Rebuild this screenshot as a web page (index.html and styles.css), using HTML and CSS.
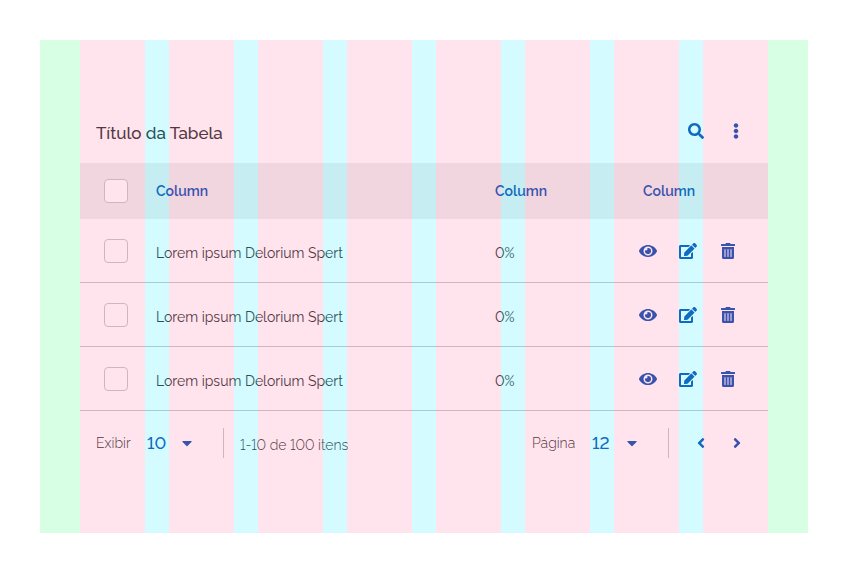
FILE: index.html
```html
<!DOCTYPE html>
<html lang="pt-BR">
<head>
<meta charset="utf-8">
<meta name="viewport" content="width=device-width, initial-scale=1">
<title>Título da Tabela</title>
<link rel="stylesheet" href="styles.css">
</head>
<body>
<svg class="sprite" aria-hidden="true">
  <symbol id="search" viewBox="0 0 512 512"><path d="M505 442.7L405.3 343c-4.5-4.5-10.6-7-17-7H372c27.6-35.3 44-79.7 44-128C416 93.1 322.9 0 208 0S0 93.1 0 208s93.1 208 208 208c48.3 0 92.7-16.4 128-44v16.3c0 6.4 2.5 12.5 7 17l99.7 99.7c9.4 9.4 24.6 9.4 33.9 0l28.3-28.3c9.4-9.4 9.4-24.6.1-34zM208 336c-70.7 0-128-57.2-128-128 0-70.7 57.2-128 128-128 70.7 0 128 57.2 128 128 0 70.7-57.2 128-128 128z"/></symbol>
  <symbol id="more" viewBox="0 0 192 512"><path d="M96 184c39.8 0 72 32.2 72 72s-32.2 72-72 72-72-32.2-72-72 32.2-72 72-72zM24 80c0 39.8 32.2 72 72 72s72-32.2 72-72S135.8 8 96 8 24 40.2 24 80zm0 352c0 39.8 32.2 72 72 72s72-32.2 72-72-32.2-72-72-72-72 32.2-72 72z"/></symbol>
  <symbol id="eye" viewBox="0 0 576 512"><path d="M572.52 241.4C518.29 135.59 410.93 64 288 64S57.68 135.64 3.48 241.41a32.35 32.35 0 0 0 0 29.19C57.71 376.41 165.07 448 288 448s230.32-71.64 284.52-177.41a32.35 32.35 0 0 0 0-29.19zM288 400a144 144 0 1 1 144-144 143.93 143.93 0 0 1-144 144zm0-240a95.31 95.31 0 0 0-25.31 3.79 47.85 47.85 0 0 1-66.9 66.9A95.78 95.78 0 1 0 288 160z"/></symbol>
  <symbol id="edit" viewBox="0 0 576 512"><path d="M402.6 83.2l90.2 90.2c3.8 3.8 3.8 10 0 13.8L274.4 405.6l-92.8 10.3c-12.4 1.4-22.9-9.1-21.5-21.5l10.3-92.8L388.8 83.2c3.8-3.8 10-3.8 13.8 0zm162-22.9l-48.8-48.8c-15.2-15.2-39.9-15.2-55.2 0l-35.4 35.4c-3.8 3.8-3.8 10 0 13.8l90.2 90.2c3.8 3.8 10 3.8 13.8 0l35.4-35.4c15.2-15.3 15.2-40 0-55.2zM384 346.2V448H64V128h229.8c3.2 0 6.2-1.3 8.5-3.5l40-40c7.6-7.6 2.2-20.5-8.5-20.5H48C21.5 64 0 85.5 0 112v352c0 26.5 21.5 48 48 48h352c26.5 0 48-21.5 48-48V306.2c0-10.7-12.9-16-20.5-8.5l-40 40c-2.2 2.3-3.5 5.3-3.5 8.5z"/></symbol>
  <symbol id="trash" viewBox="0 0 448 512"><path d="M32 464a48 48 0 0 0 48 48h288a48 48 0 0 0 48-48V128H32zm272-256a16 16 0 0 1 32 0v224a16 16 0 0 1-32 0zm-96 0a16 16 0 0 1 32 0v224a16 16 0 0 1-32 0zm-96 0a16 16 0 0 1 32 0v224a16 16 0 0 1-32 0zM432 32H312l-9.4-18.7A24 24 0 0 0 281.1 0H166.8a23.72 23.72 0 0 0-21.4 13.3L136 32H16A16 16 0 0 0 0 48v32a16 16 0 0 0 16 16h416a16 16 0 0 0 16-16V48a16 16 0 0 0-16-16z"/></symbol>
  <symbol id="caret" viewBox="0 0 320 512"><path d="M31.3 192h257.3c17.8 0 26.7 21.5 14.1 34.1L174.1 354.8c-7.8 7.8-20.5 7.8-28.3 0L17.2 226.1C4.6 213.5 13.5 192 31.3 192z"/></symbol>
  <symbol id="left" viewBox="0 0 256 512"><path d="M31.7 239l136-136c9.4-9.4 24.6-9.4 33.9 0l22.6 22.6c9.4 9.4 9.4 24.6 0 33.9L127.9 256l96.4 96.4c9.4 9.4 9.4 24.6 0 33.9L201.7 409c-9.4 9.4-24.6 9.4-33.9 0l-136-136c-9.5-9.4-9.5-24.6-.1-34z"/></symbol>
  <symbol id="right" viewBox="0 0 256 512"><path d="M224.3 273l-136 136c-9.4 9.4-24.6 9.4-33.9 0l-22.6-22.6c-9.4-9.4-9.4-24.6 0-33.9l96.4-96.4-96.4-96.4c-9.4-9.4-9.4-24.6 0-33.9L54.3 103c9.4-9.4 24.6-9.4 33.9 0l136 136c9.5 9.4 9.5 24.6.1 34z"/></symbol>
</svg>
<main class="frame">
  <header class="toolbar">
    <h1 class="title">Título da Tabela</h1>
    <div class="tools">
      <button class="icon-button" type="button" aria-label="Buscar"><svg class="icon"><use href="#search"/></svg></button>
      <button class="icon-button" type="button" aria-label="Mais opções"><svg class="icon"><use href="#more"/></svg></button>
    </div>
  </header>
  <table class="table">
    <colgroup><col class="col-check"><col><col class="col-value"><col class="col-actions"></colgroup>
    <thead>
      <tr>
        <th class="check-cell"><input class="check" type="checkbox" aria-label="Selecionar tudo"></th>
        <th scope="col">Column</th>
        <th scope="col">Column</th>
        <th scope="col">Column</th>
      </tr>
    </thead>
    <tbody>
      <tr>
        <td class="check-cell"><input class="check" type="checkbox" aria-label="Selecionar linha 1"></td>
        <td>Lorem ipsum Delorium Spert</td>
        <td>0%</td>
        <td class="actions-cell"><div class="actions">
          <button class="icon-button" type="button" aria-label="Ver"><svg class="icon"><use href="#eye"/></svg></button>
          <button class="icon-button" type="button" aria-label="Editar"><svg class="icon"><use href="#edit"/></svg></button>
          <button class="icon-button" type="button" aria-label="Excluir"><svg class="icon"><use href="#trash"/></svg></button>
        </div></td>
      </tr>
      <tr>
        <td class="check-cell"><input class="check" type="checkbox" aria-label="Selecionar linha 2"></td>
        <td>Lorem ipsum Delorium Spert</td>
        <td>0%</td>
        <td class="actions-cell"><div class="actions">
          <button class="icon-button" type="button" aria-label="Ver"><svg class="icon"><use href="#eye"/></svg></button>
          <button class="icon-button" type="button" aria-label="Editar"><svg class="icon"><use href="#edit"/></svg></button>
          <button class="icon-button" type="button" aria-label="Excluir"><svg class="icon"><use href="#trash"/></svg></button>
        </div></td>
      </tr>
      <tr>
        <td class="check-cell"><input class="check" type="checkbox" aria-label="Selecionar linha 3"></td>
        <td>Lorem ipsum Delorium Spert</td>
        <td>0%</td>
        <td class="actions-cell"><div class="actions">
          <button class="icon-button" type="button" aria-label="Ver"><svg class="icon"><use href="#eye"/></svg></button>
          <button class="icon-button" type="button" aria-label="Editar"><svg class="icon"><use href="#edit"/></svg></button>
          <button class="icon-button" type="button" aria-label="Excluir"><svg class="icon"><use href="#trash"/></svg></button>
        </div></td>
      </tr>
    </tbody>
  </table>
  <footer class="pagination">
    <div class="group">
      <label class="label-show" for="per-page">Exibir</label>
      <div class="picker">
        <select id="per-page" class="select"><option>10</option><option>20</option></select>
        <svg class="icon caret"><use href="#caret"/></svg>
      </div>
      <span class="divider"></span>
      <span class="range">1-10 de 100 itens</span>
    </div>
    <div class="group">
      <label class="label-page" for="page">Página</label>
      <div class="picker">
        <select id="page" class="select"><option>12</option><option>13</option></select>
        <svg class="icon caret"><use href="#caret"/></svg>
      </div>
      <span class="divider"></span>
      <nav class="pager" aria-label="Paginação">
        <button class="page-button" type="button" aria-label="Página anterior"><svg class="icon"><use href="#left"/></svg></button>
        <button class="page-button" type="button" aria-label="Próxima página"><svg class="icon"><use href="#right"/></svg></button>
      </nav>
    </div>
  </footer>
  <div class="grid-overlay" aria-hidden="true">
    <div class="margin"></div>
    <div class="columns"><i></i><i></i><i></i><i></i><i></i><i></i><i></i><i></i></div>
    <div class="margin"></div>
  </div>
</main>
</body>
</html>
```

FILE: styles.css
```css
* {
  box-sizing: border-box;
}

:root {
  --blue: #1351b4;
  --text: #333;
  --line: #c8c8c8;
}

body {
  margin: 0;
  padding: 40px;
  background: #fff;
  color: var(--text);
  font: 14px/20px Raleway, Lato, sans-serif;
  font-variant-numeric: lining-nums;
}

.sprite {
  display: none;
}

.frame {
  position: relative;
  padding: 59px 40px 58px;
}

.toolbar {
  display: flex;
  align-items: center;
  justify-content: space-between;
  height: 64px;
  padding: 0 12px 0 16px;
}

.title {
  margin: 4px 0 0;
  font-size: 17px;
  line-height: 24px;
  font-weight: 500;
}

.tools,
.actions {
  display: flex;
}

.actions {
  justify-content: flex-end;
}

button {
  display: flex;
  align-items: center;
  justify-content: center;
  padding: 0;
  border: 0;
  background: transparent;
  color: var(--blue);
}

.icon-button {
  width: 40px;
  height: 40px;
}

.icon {
  width: 18px;
  height: 16px;
  fill: currentColor;
}

.table {
  width: 100%;
  table-layout: fixed;
  border-collapse: separate;
  border-spacing: 0;
}

.col-check {
  width: 60px;
}

.col-value {
  width: 148px;
}

.col-actions {
  width: 141px;
}

th,
td {
  padding: 0 16px;
  text-align: left;
  vertical-align: middle;
}

th {
  height: 56px;
  background: #efefef;
  color: var(--blue);
  font-weight: 600;
}

td {
  height: 64px;
  padding-top: 4px;
  border-bottom: 1px solid var(--line);
}

.check-cell {
  padding: 0 0 0 24px;
}

.actions-cell {
  padding: 0 20px 0 0;
}

.check {
  appearance: none;
  display: block;
  width: 24px;
  height: 24px;
  margin: 0;
  border: 1px solid var(--line);
  border-radius: 4px;
  background: #fff;
}

.pagination {
  display: flex;
  align-items: center;
  justify-content: space-between;
  height: 64px;
  padding: 0 13px 0 16px;
  font-weight: 300;
}

.group,
.pager {
  display: flex;
  align-items: center;
}

.label-show {
  width: 35px;
}

.label-page {
  width: 44px;
}

.picker {
  position: relative;
}

.select {
  appearance: none;
  display: block;
  width: 92px;
  height: 40px;
  padding: 0 16px;
  border: 0;
  background: transparent;
  color: var(--blue);
  font: 500 17px/24px Raleway, Lato, sans-serif;
  font-variant-numeric: lining-nums;
}

.caret {
  position: absolute;
  top: 12px;
  right: 27px;
  color: var(--blue);
  pointer-events: none;
}

.divider {
  width: 1px;
  height: 30px;
  background: var(--line);
}

.range {
  margin-left: 16px;
  padding-top: 3px;
}

.pager {
  margin-left: 14px;
}

.page-button {
  width: 36px;
  height: 36px;
}

.grid-overlay {
  position: absolute;
  inset: 0;
  display: flex;
  pointer-events: none;
}

.margin {
  width: 40px;
  background: rgba(0, 255, 81, 0.16);
}

.columns {
  flex: 1;
  display: flex;
  gap: 24px;
}

.columns i {
  position: relative;
  flex: 1;
  background: rgba(255, 90, 142, 0.16);
}

.columns i:not(:last-child)::after {
  content: "";
  position: absolute;
  top: 0;
  bottom: 0;
  left: 100%;
  width: 24px;
  background: rgba(0, 231, 255, 0.17);
}
```
